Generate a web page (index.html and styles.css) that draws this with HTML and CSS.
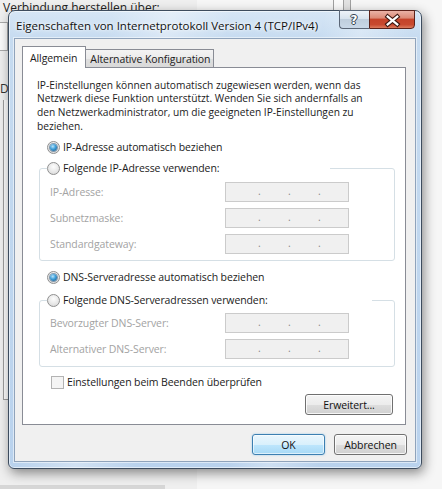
FILE: index.html
```html
<!DOCTYPE html>
<html lang="de">
<head>
<meta charset="utf-8">
<title>Eigenschaften von Internetprotokoll Version 4 (TCP/IPv4)</title>
<link rel="stylesheet" href="styles.css">
</head>
<body>
<div class="desktop">
  <div class="bg-text">Verbindung herstellen über:</div>
  <div class="bg-box"></div>
  <div class="bg-letter">D</div>
  <div class="bg-list"></div>
  <div class="bg-bar"></div>
  <div class="bg-scroll"><span></span></div>

  <div class="dialog">
    <div class="titlebar">
      <span class="title">Eigenschaften von Internetprotokoll Version 4 (TCP/IPv4)</span>
      <div class="caption-btns">
        <span class="cap-btn help">?</span>
        <span class="cap-btn close"><svg width="46" height="18" viewBox="0 0 46 18"><path d="M18.5 5.5 L28.5 13.5 M28.5 5.5 L18.5 13.5" stroke="#3b1610" stroke-width="4.6" stroke-linecap="square" fill="none"/><path d="M18.5 5.5 L28.5 13.5 M28.5 5.5 L18.5 13.5" stroke="#ffffff" stroke-width="2.4" stroke-linecap="square" fill="none"/></svg></span>
      </div>
    </div>
    <div class="client">
      <div class="tabs">
        <span class="tab active">Allgemein</span>
        <span class="tab">Alternative Konfiguration</span>
      </div>
      <div class="panel">
        <p class="intro">IP-Einstellungen können automatisch zugewiesen werden, wenn das<br>Netzwerk diese Funktion unterstützt. Wenden Sie sich andernfalls an<br>den Netzwerkadministrator, um die geeigneten IP-Einstellungen zu<br>beziehen.</p>

        <div class="radio-row r-ip"><span class="radio on"></span>IP-Adresse automatisch beziehen</div>
        <fieldset class="group g-ip">
          <legend class="legend-ip"><span class="radio-row"><span class="radio"></span>Folgende IP-Adresse verwenden:</span></legend>
          <div class="fields">
            <span class="flabel">IP-Adresse:</span><span class="ip"><i>.</i><i>.</i><i>.</i></span>
            <span class="flabel">Subnetzmaske:</span><span class="ip"><i>.</i><i>.</i><i>.</i></span>
            <span class="flabel">Standardgateway:</span><span class="ip"><i>.</i><i>.</i><i>.</i></span>
          </div>
        </fieldset>

        <div class="radio-row r-dns"><span class="radio on"></span>DNS-Serveradresse automatisch beziehen</div>
        <fieldset class="group g-dns">
          <legend class="legend-dns"><span class="radio-row"><span class="radio"></span>Folgende DNS-Serveradressen verwenden:</span></legend>
          <div class="fields">
            <span class="flabel">Bevorzugter DNS-Server:</span><span class="ip"><i>.</i><i>.</i><i>.</i></span>
            <span class="flabel">Alternativer DNS-Server:</span><span class="ip"><i>.</i><i>.</i><i>.</i></span>
          </div>
        </fieldset>

        <div class="check-row"><span class="checkbox"></span>Einstellungen beim Beenden überprüfen</div>
        <div class="panel-actions"><span class="btn wide">Erweitert...</span></div>
      </div>
      <div class="actions">
        <span class="btn default">OK</span>
        <span class="btn">Abbrechen</span>
      </div>
    </div>
  </div>
</div>
</body>
</html>
```

FILE: styles.css
```css
* { box-sizing: border-box; }
html, body { margin: 0; }
body {
  background: #f4f4f4;
  font-family: "Open Sans", "Noto Sans", sans-serif;
  font-size: 10.5px;
  letter-spacing: -0.1px;
  color: #1b1b1b;
  overflow: hidden;
}
.desktop {
  position: relative;
  width: 442px;
  height: 489px;
  overflow: hidden;
  background: linear-gradient(90deg, #efefef 0, #efefef 197px, #f6f6f6 197px);
}

/* window behind */
.bg-text {
  position: absolute; left: 3px; top: -1px;
  font-size: 12px; letter-spacing: 0; color: #222; white-space: nowrap;
}
.bg-box {
  position: absolute; left: -2px; top: 22px; width: 10px; height: 29px;
  border: 1px solid #a9a9a9; background: #fbfbfb;
}
.bg-letter {
  position: absolute; left: 0; top: 80px; font-size: 12px; color: #333;
}
.bg-list {
  position: absolute; left: 3px; top: 100px; width: 12px; height: 300px;
  border-left: 1px solid #9d9d9d; border-bottom: 1px solid #9d9d9d;
  background: #fdfdfd;
  box-shadow: 0 6px 0 -5px #a5a5a5;
}
.bg-bar {
  position: absolute; left: 0; top: 485px; width: 165px; height: 4px; background: #d6d6d6;
}
.bg-scroll {
  position: absolute; left: 333px; top: 0; width: 18px; height: 14px;
  border-left: 1px solid #a0a0a0; border-right: 1px solid #a0a0a0;
  background: #fafafa;
}
.bg-scroll span {
  position: absolute; left: 9px; top: 0; width: 7px; height: 14px;
  border-left: 1px solid #a0a0a0; background: #e2e2e2;
}

/* dialog */
.dialog {
  position: absolute; left: 8px; top: 10px;
  width: 414px; height: 459px;
  border: 1px solid #3d4c5e;
  border-radius: 7px 7px 6px 6px;
  background:
    linear-gradient(102deg, rgba(255,255,255,0) 20%, rgba(255,255,255,.35) 32%, rgba(255,255,255,0) 44%, rgba(255,255,255,0) 62%, rgba(255,255,255,.3) 70%, rgba(255,255,255,0) 80%),
    linear-gradient(180deg, #d6e6f6 0, #c6dbf0 28px, #b9d2ed 100%);
  box-shadow: 2px 4px 12px rgba(0,0,0,.45), inset 0 0 0 1px rgba(255,255,255,.55);
  display: flex;
  flex-direction: column;
}
.titlebar {
  height: 27px;
  display: flex;
  align-items: center;
  padding: 0 6px 0 7px;
}
.title {
  flex: 1;
  font-size: 11.5px;
  letter-spacing: 0;
  color: #111;
  text-shadow: 0 0 6px #fff, 0 0 3px #fff;
  padding-top: 2px;
}
.caption-btns {
  align-self: flex-start;
  margin-top: -1px;
  display: flex;
}
.cap-btn {
  height: 19px;
  border: 1px solid #5a6677;
  display: flex; align-items: center; justify-content: center;
}
.help {
  width: 30px;
  border-right: none;
  border-radius: 0 0 0 4px;
  background: linear-gradient(180deg, #eef3f9 0, #d8e3ee 45%, #bfcedd 50%, #c9d8e8 100%);
  color: #fff;
  font-family: "DejaVu Sans", sans-serif;
  font-weight: bold;
  font-size: 12px;
  letter-spacing: 0;
  text-shadow: 0 0 1px #2d3a48, 1px 0 0 #3a4656, -1px 0 0 #3a4656, 0 1px 0 #3a4656, 0 -1px 0 #3a4656;
  padding-right: 1px;
}
.close {
  width: 46px;
  border-color: #5c2119;
  border-radius: 0 0 4px 0;
  background: linear-gradient(180deg, #eab2a6 0, #dc8b78 40%, #c5432a 50%, #c8492f 80%, #dc7b5e 100%);
}
.close svg { display: block; }

.client {
  flex: 1;
  margin: 0 5px 6px 5px;
  border: 1px solid #8fa3bb;
  background: #f0f0f0;
  box-shadow: 0 0 0 1px rgba(255,255,255,.5);
  padding: 7px 8px 0 7px;
  display: flex;
  flex-direction: column;
}
.tabs {
  display: flex;
  align-items: flex-end;
  height: 22px;
}
.tab {
  height: 19px;
  border: 1px solid #898c95;
  border-bottom: none;
  background: linear-gradient(180deg, #f3f3f3 0, #ebebeb 50%, #dedede 50%, #d9d9d9 100%);
  padding: 0 3px 0 4px;
  display: flex; align-items: center;
  margin-left: -1px;
  white-space: nowrap;
}
.tab.active {
  height: 22px;
  background: #fff;
  padding: 0 8px 0 7px;
  margin-left: 0;
  position: relative;
  z-index: 2;
}
.panel {
  margin-top: -1px;
  margin-right: 1px;
  border: 1px solid #898c95;
  background: #fff;
  padding: 10.5px 12px 9px 14px;
}
.intro {
  margin: 0;
  font-size: 10.2px;
  letter-spacing: 0;
  line-height: 13.9px;
  white-space: nowrap;
}
.radio-row {
  height: 20px;
  display: flex;
  align-items: center;
  white-space: nowrap;
}
.r-ip { margin: 3px 0 0 10px; }
.r-dns { margin: 6px 0 0 10px; }
.radio {
  width: 13px; height: 13px;
  border-radius: 50%;
  border: 1px solid #8f8f8f;
  background: radial-gradient(circle at 50% 35%, #fdfdfd 0, #e6e6e6 60%, #d2d2d2 100%);
  margin-right: 3px;
  flex: none;
  display: flex; align-items: center; justify-content: center;
}
.radio.on::after {
  content: "";
  width: 7px; height: 7px; border-radius: 50%;
  background: radial-gradient(circle at 40% 35%, #b9e4fa 0, #3e9ed8 45%, #174f7f 100%);
  box-shadow: 0 0 0 1px rgba(23,70,110,.5);
}
.group {
  margin: 1px 0 0 2px;
  width: 356px;
  padding: 0 0 6px 10px;
  border: 1px solid #d5dfe5;
  border-radius: 3px;
}
.g-dns { margin-top: 3px; padding-bottom: 7px; }
.group legend {
  padding: 0;
  margin-left: -3px;
  background: #fff;
}
.legend-ip { width: 283px; }
.legend-dns { width: 325px; }
.fields {
  margin-top: 4px;
  display: grid;
  grid-template-columns: 175px 124px;
  row-gap: 6px;
}
.g-dns .fields { margin-top: 3px; }
.flabel {
  color: #a3a3a3;
  align-self: center;
  white-space: nowrap;
}
.ip {
  height: 20px;
  border: 1px solid #cbcbcb;
  background: #f0f0f0;
  display: flex;
  gap: 27px;
  padding-left: 32px;
  color: #8a8a8a;
  line-height: 17px;
  letter-spacing: 0;
}
.ip i { font-style: normal; width: 3px; }
.check-row {
  height: 20px;
  margin: 5px 0 0 14px;
  display: flex;
  align-items: center;
  white-space: nowrap;
}
.checkbox {
  width: 13px; height: 13px;
  border: 1px solid #b3b3b3;
  background: #f4f4f4;
  margin-right: 3px;
}
.panel-actions {
  margin-top: 2px;
  display: flex;
  justify-content: flex-end;
}
.btn {
  height: 21px;
  width: 73px;
  border: 1px solid #707070;
  border-radius: 3px;
  background: linear-gradient(180deg, #f4f4f4 0, #ececec 50%, #dedede 50%, #d0d0d0 100%);
  box-shadow: inset 0 0 0 1px rgba(255,255,255,.8);
  display: flex; align-items: center; justify-content: center;
  color: #111;
}
.btn.wide { width: 88px; }
.btn.default {
  border-color: #3c7fb1;
  background: linear-gradient(180deg, #eaf6fd 0, #d9f0fc 50%, #bee6fd 50%, #a7d9f5 100%);
  box-shadow: inset 0 0 0 1px rgba(255,255,255,.6), 0 0 2px rgba(60,160,230,.5);
}
.actions {
  margin-top: 9px;
  display: flex;
  justify-content: flex-end;
  gap: 9px;
}
```
